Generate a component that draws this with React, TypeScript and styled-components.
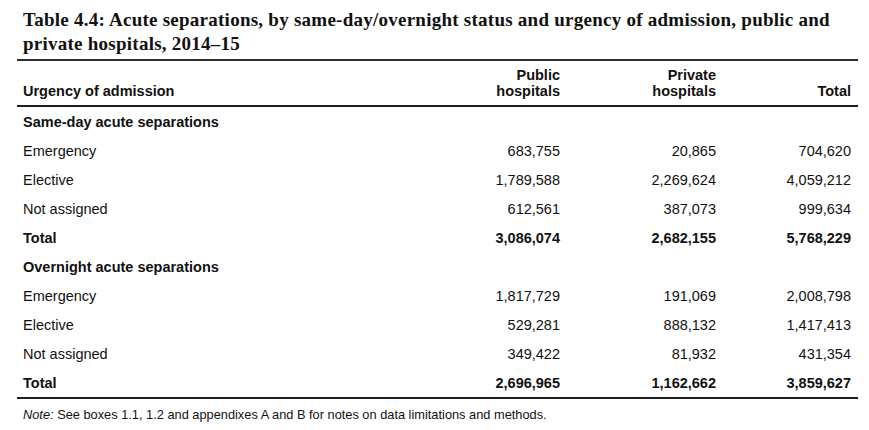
import React from "react";
import styled, { createGlobalStyle } from "styled-components";

const Global = createGlobalStyle`
  html, body { margin: 0; padding: 0; background: #ffffff; }
  body { font-family: "Liberation Sans", Arial, sans-serif; color: #111; }
`;

const Page = styled.div`
  padding: 8px 0 0 17px;
  width: 841px;
`;

const Title = styled.h1`
  margin: 0 0 0 6px;
  font-family: "Liberation Serif", "Times New Roman", serif;
  font-weight: 700;
  font-size: 19px;
  letter-spacing: 0.25px;
  line-height: 24px;
  color: #111;
  white-space: nowrap;
`;

const Table = styled.div`
  margin-top: 3px;
  border-top: 2px solid #2e2e2e;
  border-bottom: 2px solid #1e1e1e;
`;

const cols = "381px 156px 156px 135px";

const HeadRow = styled.div`
  display: grid;
  grid-template-columns: ${cols};
  align-items: end;
  height: 46px;
  padding: 0 7px 6px 6px;
  box-sizing: border-box;
  border-bottom: 2px solid #1e1e1e;
  font-weight: 700;
  font-size: 14.5px;
  line-height: 16px;
`;

const HeadCell = styled.div<{ $right?: boolean }>`
  text-align: ${(p) => (p.$right ? "right" : "left")};
`;

const Row = styled.div<{ $bold?: boolean }>`
  display: grid;
  grid-template-columns: ${cols};
  align-items: center;
  height: 29px;
  padding: 0 7px 0 6px;
  font-size: 14.5px;
  font-weight: ${(p) => (p.$bold ? 700 : 400)};
`;

const Cell = styled.div<{ $right?: boolean }>`
  text-align: ${(p) => (p.$right ? "right" : "left")};
  white-space: nowrap;
`;

const SectionHead = styled.div`
  grid-column: 1 / -1;
  font-weight: 700;
`;

const Note = styled.p`
  margin: 8px 0 0 6px;
  font-size: 12.8px;
  line-height: 16px;
  color: #111;
  white-space: nowrap;
`;

const NoteLabel = styled.i``;

type DataRow = { label: string; values: [string, string, string]; bold?: boolean };
type Section = { title: string; rows: DataRow[] };

const sections: Section[] = [
  {
    title: "Same-day acute separations",
    rows: [
      { label: "Emergency", values: ["683,755", "20,865", "704,620"] },
      { label: "Elective", values: ["1,789,588", "2,269,624", "4,059,212"] },
      { label: "Not assigned", values: ["612,561", "387,073", "999,634"] },
      { label: "Total", values: ["3,086,074", "2,682,155", "5,768,229"], bold: true },
    ],
  },
  {
    title: "Overnight acute separations",
    rows: [
      { label: "Emergency", values: ["1,817,729", "191,069", "2,008,798"] },
      { label: "Elective", values: ["529,281", "888,132", "1,417,413"] },
      { label: "Not assigned", values: ["349,422", "81,932", "431,354"] },
      { label: "Total", values: ["2,696,965", "1,162,662", "3,859,627"], bold: true },
    ],
  },
];

export default function App() {
  return (
    <>
      <Global />
      <Page>
        <Title>
          Table 4.4: Acute separations, by same-day/overnight status and urgency of admission, public and
          <br />
          private hospitals, 2014–15
        </Title>
        <Table>
          <HeadRow>
            <HeadCell>Urgency of admission</HeadCell>
            <HeadCell $right>
              Public
              <br />
              hospitals
            </HeadCell>
            <HeadCell $right>
              Private
              <br />
              hospitals
            </HeadCell>
            <HeadCell $right>Total</HeadCell>
          </HeadRow>
          {sections.map((s) => (
            <React.Fragment key={s.title}>
              <Row>
                <SectionHead>{s.title}</SectionHead>
              </Row>
              {s.rows.map((r) => (
                <Row key={s.title + r.label} $bold={r.bold}>
                  <Cell>{r.label}</Cell>
                  {r.values.map((v, i) => (
                    <Cell key={i} $right>
                      {v}
                    </Cell>
                  ))}
                </Row>
              ))}
            </React.Fragment>
          ))}
        </Table>
        <Note>
          <NoteLabel>Note:</NoteLabel> See boxes 1.1, 1.2 and appendixes A and B for notes on data limitations and methods.
        </Note>
      </Page>
    </>
  );
}
